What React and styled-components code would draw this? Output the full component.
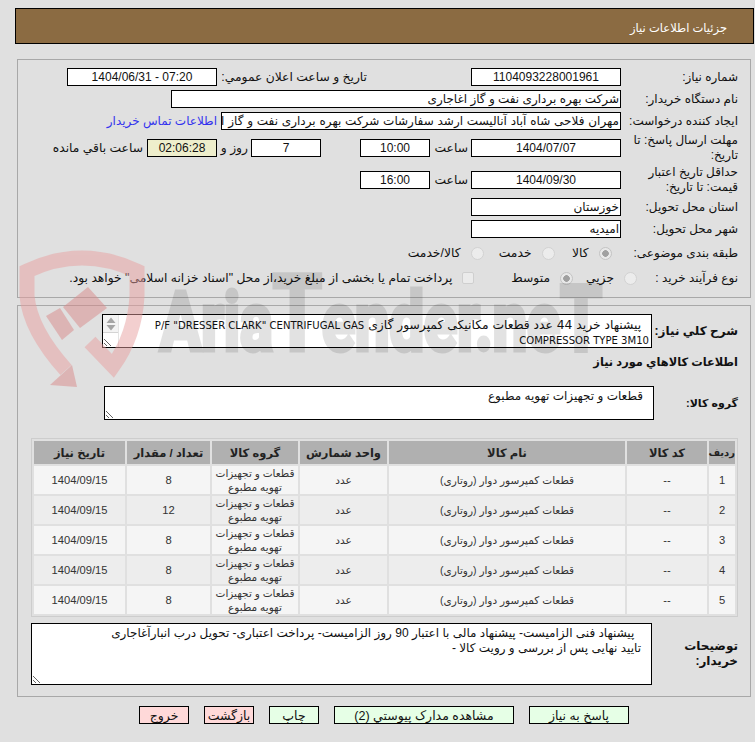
import React from "react";
import styled, { createGlobalStyle } from "styled-components";

const GlobalStyle = createGlobalStyle`
  html, body {
    margin: 0;
    padding: 0;
    background: #e0e0e0;
  }
  body {
    font-family: "Liberation Sans", "DejaVu Sans", sans-serif;
    font-size: 12px;
    color: #111;
  }
`;

const Page = styled.div`
  position: relative;
  width: 755px;
  height: 742px;
  overflow: hidden;
  direction: rtl;
`;

/* the logo sits over the whole form like a stamp, the fields show through it */
const Watermark = styled.svg`
  position: absolute;
  left: 0;
  top: 0;
  z-index: 2;
  pointer-events: none;
`;

const Content = styled.div`
  position: relative;
  z-index: 1;
  padding-top: 8px;
`;

const Header = styled.div`
  box-sizing: border-box;
  width: 739px;
  height: 36px;
  margin-right: 1px;
  padding: 4px 26px 0 0;
  display: flex;
  align-items: center;
  background: #8b6b42;
  border: 1px solid #000;
  color: #fff;
  font-size: 11.5px;
`;

const Panel = styled.section`
  box-sizing: border-box;
  width: 734px;
  margin-right: 4px;
  margin-top: ${(p) => p.$top}px;
  padding: ${(p) => p.$pad};
  border: 1px solid #a8a8a8;
`;

const Row = styled.div`
  display: flex;
  align-items: center;
  height: ${(p) => p.$h}px;
  margin-top: ${(p) => p.$top || 0}px;
`;

const Label = styled.div`
  flex: none;
  box-sizing: border-box;
  width: ${(p) => p.$w || 117}px;
  margin-right: ${(p) => p.$mr || 0}px;
  line-height: 15px;
  font-size: ${(p) => p.$fs || 12}px;
  font-weight: ${(p) => (p.$bold ? "bold" : "normal")};
`;

const Field = styled.div`
  flex: none;
  box-sizing: border-box;
  width: ${(p) => p.$w}px;
  height: 18px;
  margin-right: ${(p) => p.$mr || 0}px;
  padding: 0 1px;
  border: 1px solid #000;
  background: ${(p) => p.$bg || "#fff"};
  direction: ${(p) => (p.$ltr ? "ltr" : "rtl")};
  line-height: 16px;
  word-spacing: ${(p) => p.$ws || 0}px;
  text-align: ${(p) => (p.$start ? "right" : "center")};
  white-space: nowrap;
  overflow: hidden;
`;

const Inline = styled.span`
  flex: none;
  width: ${(p) => (p.$w ? `${p.$w}px` : "auto")};
  margin-right: ${(p) => p.$mr || 0}px;
  font-size: 12.3px;
  white-space: nowrap;
`;

const ContactLink = styled.a`
  margin-right: 4px;
  color: #3333ee;
  text-decoration: none;
  white-space: nowrap;
`;

const Option = styled.label`
  flex: none;
  display: flex;
  align-items: center;
  width: ${(p) => (p.$w ? `${p.$w}px` : "auto")};
  font-size: 12.3px;
  white-space: nowrap;
`;

const Radio = styled.input.attrs({ type: "radio", disabled: true })`
  appearance: none;
  flex: none;
  box-sizing: border-box;
  width: 13px;
  height: 13px;
  margin: 0 0 0 10px;
  border: 1px solid #d2d2d2;
  border-radius: 50%;
  background: #ececec;
  &:checked {
    background: radial-gradient(circle, #a0a0a0 0 3px, #e8e8e8 3.6px);
    border-color: #c4c4c4;
  }
`;

const Check = styled.input.attrs({ type: "checkbox", disabled: true })`
  appearance: none;
  flex: none;
  box-sizing: border-box;
  width: 12px;
  height: 12px;
  margin: 0 0 0 9px;
  border: 1px solid #cfcfcf;
  border-radius: 2px;
  background: #ebebeb;
`;

const Area = styled.textarea`
  flex: none;
  display: block;
  box-sizing: border-box;
  width: ${(p) => p.$w}px;
  height: ${(p) => p.$h}px;
  margin: 0;
  padding: 2px 10px;
  border: 1px solid #000;
  border-radius: 0;
  background: #fff;
  color: #111;
  font: 12px/15px "Liberation Sans", "DejaVu Sans", sans-serif;
  outline: none;
  overflow: auto;
`;

/* description box: mixed latin and persian need different sizes, so a div with a resize handle */
const SummaryBox = styled.div`
  position: relative;
  flex: none;
  box-sizing: border-box;
  width: 550px;
  height: 34px;
  padding: 3px 2px 0 18px;
  border: 1px solid #000;
  background: #fff;
  font: 12.3px/14px "DejaVu Sans", sans-serif;
  overflow: hidden;
  resize: both;
`;

const LatinText = styled.span`
  font-family: "DejaVu Sans Condensed", "Liberation Sans", sans-serif;
  font-size: 11.2px;
`;

const FakeScrollbar = styled.svg`
  position: absolute;
  left: 0;
  top: 0;
`;

const SectionTitle = styled.div`
  height: 20px;
  margin: 4px 0 14px;
  padding-right: 12px;
  font-size: 11.4px;
  line-height: 20px;
  font-weight: bold;
`;

const Table = styled.table`
  width: 707px;
  margin: 18px 12px 0 0;
  table-layout: fixed;
  border-collapse: separate;
  border-spacing: 2px;
  border: 1px solid #cdcdcd;
`;

const Th = styled.th`
  height: 23px;
  padding: 0;
  background: #b0b0b0;
  font-weight: bold;
  font-size: ${(p) => p.$fs || 11.5}px;
  color: #222;
  text-align: center;
  white-space: nowrap;
`;

const Tr = styled.tr`
  background: ${(p) => (p.$odd ? "#f5f5f5" : "#ededed")};
`;

const Td = styled.td`
  height: 28px;
  padding: 0;
  color: #333;
  font-size: ${(p) => (p.$fa ? 10.5 : 11.2)}px;
  line-height: 14px;
  text-align: center;
`;

const Buttons = styled.div`
  display: flex;
  gap: 15px;
  margin-top: 9px;
  padding-right: 126px;
`;

const Button = styled.button`
  box-sizing: border-box;
  flex: none;
  width: ${(p) => p.$w}px;
  height: 18px;
  padding: 0;
  border: 1px solid #000;
  border-radius: 0;
  background: ${(p) => (p.$danger ? "#ffd9d9" : "#e6ffe6")};
  color: #111;
  font: 12.5px "Liberation Sans", "DejaVu Sans", sans-serif;
`;

const columns = [
  { title: "ردیف", width: 26, fs: 10 },
  { title: "کد کالا", width: 80 },
  { title: "نام کالا", width: 236 },
  { title: "واحد شمارش", width: 87 },
  { title: "گروه کالا", width: 86 },
  { title: "تعداد / مقدار", width: 83 },
  { title: "تاریخ نیاز", width: 91 },
];

const quantities = [8, 12, 8, 8, 8];

const notes =
  "  پیشنهاد فنی الزامیست- پیشنهاد مالی با اعتبار 90 روز الزامیست- پرداخت اعتباری- تحویل درب انبارآغاجاری\nتایید نهایی پس از بررسی و رویت کالا -";

const Logo = () => (
  <Watermark width="755" height="742" viewBox="0 0 755 742" aria-hidden="true">
    <g opacity="0.5">
      <path
        d="M66 370 Q30 330 27 296 L27 271 Q82 245 137 271 L137 296 Q135 335 113 366 L90 342"
        fill="none"
        stroke="#e8a0a0"
        strokeWidth="15"
        strokeMiterlimit="10"
      />
      <polygon points="50,385 77,387 72,365" fill="#d98a8a" />
      <polygon points="46,316 60,308 74,330 62,340" fill="#d98a8a" />
      <polygon points="63,307 88,287 107,308 80,328" fill="#d98a8a" />
    </g>
    <text
      x="160"
      y="350"
      direction="ltr"
      textLength="442"
      lengthAdjust="spacingAndGlyphs"
      fontFamily="Roboto, sans-serif"
      fontWeight="700"
      fontSize="82"
      fill="#000"
      stroke="#000"
      strokeWidth="5"
      opacity="0.11"
    >
      Aria<tspan fontSize="106">T</tspan>ender.ne<tspan fontSize="90">T</tspan>
    </text>
  </Watermark>
);

const ScrollArrows = () => (
  <FakeScrollbar width="16" height="32" viewBox="0 0 16 32" aria-hidden="true">
    <rect width="16" height="17" fill="#f4f4f4" />
    <path d="M8 2.5L12.5 8H3.5z" fill="#a6a6a6" />
    <path d="M3.5 10h9L8 15.5z" fill="#a6a6a6" />
    <rect y="17" width="16" height="1" fill="#d4d4d4" />
    <rect x="15" width="1" height="32" fill="#e4e4e4" />
  </FakeScrollbar>
);

export default function App() {
  return (
    <Page>
      <GlobalStyle />
      <Content>
        <Header>جزئیات اطلاعات نیاز</Header>

        <Panel $top={15} $pad="6px 12px 7px 0">
          <Row $h={22}>
            <Label>شماره نیاز:</Label>
            <Field $w={150}>1104093228001961</Field>
            <Inline $w={150} $mr={104}>تاریخ و ساعت اعلان عمومي:</Inline>
            <Field $w={150} $ltr>1404/06/31 - 07:20</Field>
          </Row>
          <Row $h={22}>
            <Label>نام دستگاه خریدار:</Label>
            <Field $w={450} $start>شرکت بهره برداری نفت و گاز اغاجاری</Field>
          </Row>
          <Row $h={22}>
            <Label>ایجاد کننده درخواست:</Label>
            <Field $w={400} $ws={0.5} $start>مهران فلاحی شاه آباد آنالیست ارشد سفارشات شرکت بهره برداری نفت و گاز اغاجاری</Field>
            <ContactLink href="#">اطلاعات تماس خریدار</ContactLink>
          </Row>
          <Row $h={32}>
            <Label>مهلت ارسال پاسخ: تا تاریخ:</Label>
            <Field $w={150}>1404/07/07</Field>
            <Inline $w={38} $mr={3}>ساعت</Inline>
            <Field $w={70}>10:00</Field>
            <Field $w={70} $mr={39}>7</Field>
            <Inline $w={31} $mr={3}>روز و</Inline>
            <Field $w={70} $bg="#eeeecc">02:06:28</Field>
            <Inline $mr={4}>ساعت باقي مانده</Inline>
          </Row>
          <Row $h={32}>
            <Label>حداقل تاریخ اعتبار قیمت: تا تاریخ:</Label>
            <Field $w={150}>1404/09/30</Field>
            <Inline $w={38} $mr={3}>ساعت</Inline>
            <Field $w={70}>16:00</Field>
          </Row>
          <Row $h={22}>
            <Label>استان محل تحویل:</Label>
            <Field $w={150} $start>خوزستان</Field>
          </Row>
          <Row $h={22}>
            <Label>شهر محل تحویل:</Label>
            <Field $w={150} $start>امیدیه</Field>
          </Row>
          <Row $h={26}>
            <Label $w={126.5}>طبقه بندی موضوعی:</Label>
            <Option $w={57}><Radio name="kind" defaultChecked />کالا</Option>
            <Option $w={71}><Radio name="kind" />خدمت</Option>
            <Option $w={80}><Radio name="kind" />کالا/خدمت</Option>
          </Row>
          <Row $h={24}>
            <Label $w={101}>نوع فرآیند خرید :</Label>
            <Option $w={64}><Radio name="process" />جزيي</Option>
            <Option $w={99.5}><Radio name="process" defaultChecked />متوسط</Option>
            <Option>
              <Check />
              پرداخت تمام يا بخشی از مبلغ خرید،از محل "اسناد خزانه اسلامی" خواهد بود.
            </Option>
          </Row>
        </Panel>

        <Panel $top={7} $pad="8px 0 11px">
          <Row $h={34}>
            <Label $w={86} $mr={12} $bold>شرح کلي نياز:</Label>
            <SummaryBox>
              <ScrollArrows />
              {"\u00a0 پیشنهاد خرید 44 عدد قطعات مکانیکی کمپرسور گازی "}
              <LatinText dir="ltr">P/F "DRESSER CLARK" CENTRIFUGAL GAS</LatinText>
              <br />
              <LatinText dir="ltr">COMPRESSOR TYPE 3M10</LatinText>
            </SummaryBox>
          </Row>
          <SectionTitle>اطلاعات کالاهاي مورد نياز</SectionTitle>
          <Row $h={34}>
            <Label $w={84} $mr={12} $fs={11} $bold>گروه کالا:</Label>
            <Area $w={550} $h={34} readOnly defaultValue="قطعات و تجهیزات تهویه مطبوع" />
          </Row>
          <Table>
            <colgroup>
              {columns.map((c) => (
                <col key={c.title} width={c.width} />
              ))}
            </colgroup>
            <thead>
              <tr>
                {columns.map((c) => (
                  <Th key={c.title} $fs={c.fs}>{c.title}</Th>
                ))}
              </tr>
            </thead>
            <tbody>
              {quantities.map((qty, i) => (
                <Tr key={i} $odd={i % 2 === 0}>
                  <Td>{i + 1}</Td>
                  <Td>--</Td>
                  <Td $fa>قطعات کمپرسور دوار (روتاری)</Td>
                  <Td $fa>عدد</Td>
                  <Td $fa>قطعات و تجهیزات تهویه مطبوع</Td>
                  <Td>{qty}</Td>
                  <Td>1404/09/15</Td>
                </Tr>
              ))}
            </tbody>
          </Table>
          <Row $h={62} $top={6}>
            <Label $w={86} $mr={12} $bold>توضیحات خریدار:</Label>
            <Area $w={621} $h={62} readOnly defaultValue={notes} />
          </Row>
        </Panel>

        <Buttons>
          <Button $w={100}>پاسخ به نیاز</Button>
          <Button $w={180}>مشاهده مدارک پیوستي (2)</Button>
          <Button $w={50}>چاپ</Button>
          <Button $w={50} $danger>بازگشت</Button>
          <Button $w={50} $danger>خروج</Button>
        </Buttons>
      </Content>
      <Logo />
    </Page>
  );
}
